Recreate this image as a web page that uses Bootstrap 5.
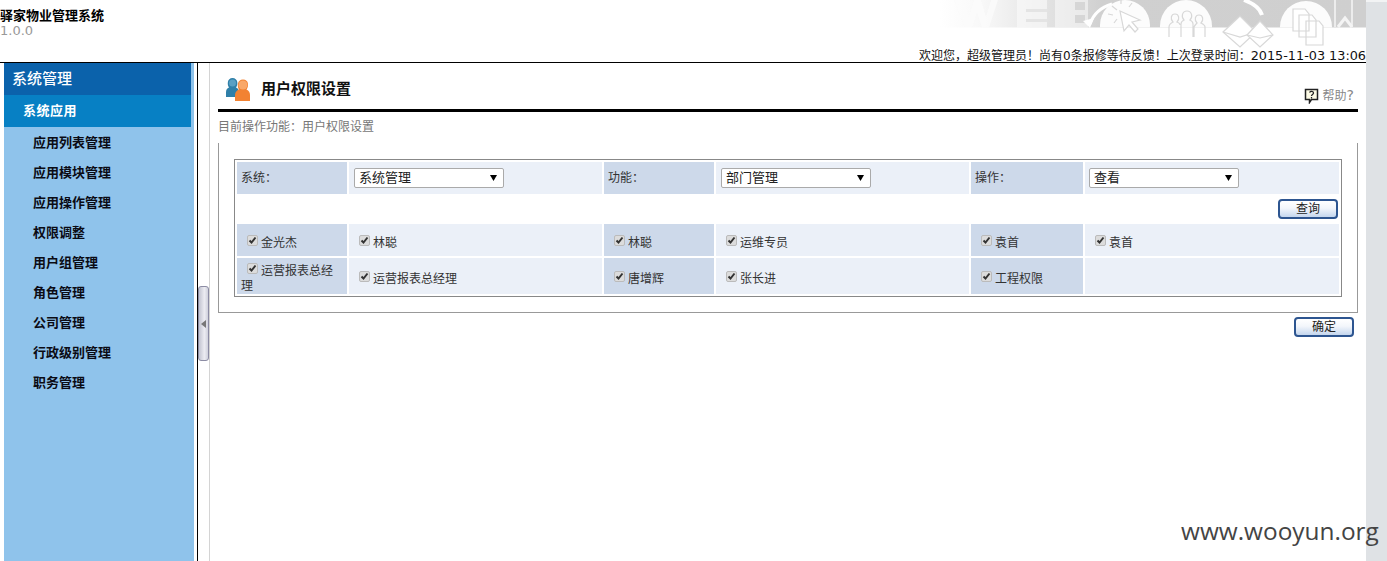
<!DOCTYPE html>
<html lang="zh-CN">
<head>
<meta charset="utf-8">
<title>用户权限设置</title>
<link href="https://cdn.jsdelivr.net/npm/bootstrap@5.3.0/dist/css/bootstrap.min.css" rel="stylesheet">
<style>
html,body{height:561px;overflow:hidden}
body{font-family:"DejaVu Sans","Noto Sans CJK SC",sans-serif;font-size:12px;line-height:15px;color:#333;background:#fff;position:relative}
.page-main{width:1366px;height:561px}
.scroll-strip{width:21px;height:561px;background:#dfe2e5;border-top:2px solid #f2f3f4}
.top-head{height:63px;border-bottom:1px solid #000;position:relative}
.banner-art{position:absolute;left:940px;top:0}
.sys-title{font-size:13px;font-weight:700;color:#000;padding-top:8px;line-height:15px}
.sys-ver{font-size:13px;color:#999;line-height:15px}
.welcome{position:absolute;right:0;top:48px;white-space:nowrap;color:#111;line-height:15px}
.welcome-date{font-size:12.800px}
.side-wrap{width:198px;padding-left:4px;border-right:1px solid #000;height:498px}
.side-menu{width:190px;height:498px;background:#8fc3eb;margin:0}
.side-head{width:187px;height:32px;line-height:33px;background:#0b62ab;color:#fff;font-size:15px;font-weight:500;padding-left:8px}
.side-sub{width:187px;height:32px;line-height:32px;background:#0780c4;color:#fff;font-size:13px;font-weight:700;letter-spacing:.5px;padding-left:19px}
.side-link{height:30px;line-height:30px;padding-left:29px;font-size:13px;font-weight:700;color:#0b0b14}
.side-list{padding-top:1px}
.toggle-col{width:12px;border-right:1px solid #d4d4d4;height:498px;padding-top:223px}
.toggle-grip{width:11px;height:75px;border:1px solid #8c8ca4;border-radius:3px;background:linear-gradient(90deg,#c2c4d0,#ececf2 60%,#cfd1dc)}
.work-area{width:1156px;padding-left:8px}
.title-row{height:46px;width:1140px;padding:14px 0 0 7px}
.page-name{font-size:15px;font-weight:700;color:#111;margin-left:10px;line-height:24px}
.help-link{color:#888;margin:8px 4px 0 0;height:21px;line-height:15px}
.help-mark{font-size:14px}
.rule-bar{height:3px;background:#000;width:1140px}
.crumb-line{height:31px;line-height:30px;color:#777}
.perm-panel{width:1140px;height:170px;border:1px solid #999;border-top:0;padding:16px 0 0 15px}
.perm-table{border-collapse:separate;border-spacing:2px;table-layout:fixed;width:1108px;border:1px solid #888}
.perm-table td{padding:0 4px;vertical-align:middle;line-height:15px}
.perm-table .row-shift td{padding-top:5px}
.cell-key{background:#cdd9ea}
.cell-val{background:#ebf0f8}
.row-a{height:32px}.row-b{height:26px}.row-c{height:36px}
.perm-select.form-select{width:150px;height:20px;padding:0 0 0 4px;margin-left:1px;font:13px/18px "DejaVu Sans","Noto Sans CJK SC",sans-serif;color:#222;border:1px solid #aaa;border-radius:2px;background-size:7px 6px;background-position:right 6px center;background-image:url("data:image/svg+xml,%3Csvg xmlns='http://www.w3.org/2000/svg' viewBox='0 0 7 6'%3E%3Cpath d='M0 0h7L3.500 6z' fill='%23000'/%3E%3C/svg%3E")}
.perm-table td:last-child .perm-select.form-select{margin-left:0}
.perm-check.form-check-input{width:11px;height:11px;margin:0 3px 5px 6px;vertical-align:middle;border:1px solid #bbb;border-radius:2px;opacity:1;background-color:#dcdcdc;background-size:9px 9px;background-image:url("data:image/svg+xml,%3Csvg xmlns='http://www.w3.org/2000/svg' viewBox='0 0 9 9'%3E%3Cpath d='M1.500 4.500l2 2 4-5' fill='none' stroke='%23333' stroke-width='2'/%3E%3C/svg%3E")}
.btn-old.btn{width:60px;height:20px;padding:0;font-size:12px;line-height:16px;color:#222;border:2px solid #2d5590;border-radius:4px;background:linear-gradient(#fff,#f3f6fb 45%,#c4d6ee)}
.btn-cell{text-align:right}
.perm-table td.btn-cell{padding:0 1px 0 0}
.confirm-row{width:1136px;text-align:right;padding-top:4px}
.mark-text{position:absolute;left:1181px;top:515px;font-family:"Open Sans",sans-serif;font-size:24.400px;line-height:32px;color:#444}
</style>
</head>
<body>
<div class="d-flex">
  <div class="page-main">
    <header class="top-head">
      <svg class="banner-art" width="426" height="50" viewBox="0 0 426 50" fill="none">
        <defs><linearGradient id="bandFade" x1="0" x2="1" y1="0" y2="0"><stop offset="0" stop-color="#fff"/><stop offset=".1" stop-color="#f8f8f8"/><stop offset=".38" stop-color="#d0d0d0"/><stop offset="1" stop-color="#cfcfcf"/></linearGradient></defs>
        <rect width="426" height="27.500" fill="url(#bandFade)"/>
        <g fill="#fbfbfb">
          <path d="M14 0h9l6 17 5-17h7l5 17 5-17h7l-9 27.500h-7l-5-15-5 15h-7z" opacity=".8"/>
          <rect x="77" y="0" width="30" height="27.500" opacity=".6"/>
          <rect x="115" y="0" width="33" height="27.500" opacity=".55"/>
        </g>
        <g fill="#e4e4e4"><rect x="86" y="9" width="21" height="3"/><rect x="86" y="19" width="21" height="3"/></g>
        <g fill="#d6d6d6"><rect x="135" y="2" width="10" height="8"/><rect x="135" y="15" width="10" height="8"/></g>
        <path d="M150 24c4-12 12-17 22-20" stroke="#fff" stroke-width="3"/><path d="M143 21l11-3-4 10z" fill="#fff"/>
        <clipPath id="bandClip"><rect width="426" height="27.500"/></clipPath>
        <g clip-path="url(#bandClip)" fill="#fcfcfc"><circle cx="185" cy="25" r="25"/><circle cx="246" cy="26" r="26"/><circle cx="366" cy="27" r="26"/></g>
        <g stroke="#d8d8d8" stroke-width="1.200">
          <path d="M180 11l20 9-8 2 6 7-3 3-6-7-5 6z" fill="#fff"/>
          <path d="M172 6l5 4M181 0v4M192 3l-3 4M168 14l5 1M177 19l-3 4"/>
          <path d="M229 37V27c0-3 2-4 4-5-3-3-2-8 2-8s5 5 2 8c2 1 3 1 3 3M241 37V24c0-2 1-3 3-4-3-3-2-9 3-9s6 6 3 9c2 1 3 2 3 4v13M254 37V27c1-2 2-3 3-4-3-3-2-8 2-8s5 5 2 8c2 1 4 2 4 4v10"/>
          <path d="M283 32l17-16 16 16-16 15z" fill="#fff"/><path d="M283 32l17 5 16-5"/>
          <path d="M307 35l13-14 13 14-13 12z" fill="#fff"/><path d="M307 35l13 3 13-3"/>
          <path d="M353 26V9h12l4 5v17h-16zM359 32V15h13l4 5v17h-17zM366 38V21h13l4 5v19h-17z" fill="#fff"/>
        </g>
        <path d="M304 0c8 3 16 8 18 15" stroke="#fff" stroke-width="4"/>
        <path d="M395 0v27M412 0v27" stroke="#ececec" stroke-width="2"/>
        <path d="M398 27l7-9 7 9" stroke="#f4f4f4" stroke-width="3"/>
      </svg>
      <div class="sys-title">驿家物业管理系统</div>
      <div class="sys-ver">1.0.0</div>
      <div class="welcome">欢迎您&#xFF0C;超级管理员&#xFF01;尚有0条报修等待反馈&#xFF01;上次登录时间&#xFF1A;<span class="welcome-date">2015-11-03 13:06</span></div>
    </header>
    <div class="d-flex">
      <div class="side-wrap">
        <nav class="side-menu">
          <div class="side-head">系统管理</div>
          <div class="side-sub">系统应用</div>
          <div class="side-list">
            <div class="side-link">应用列表管理</div>
            <div class="side-link">应用模块管理</div>
            <div class="side-link">应用操作管理</div>
            <div class="side-link">权限调整</div>
            <div class="side-link">用户组管理</div>
            <div class="side-link">角色管理</div>
            <div class="side-link">公司管理</div>
            <div class="side-link">行政级别管理</div>
            <div class="side-link">职务管理</div>
          </div>
        </nav>
      </div>
      <div class="toggle-col">
        <div class="toggle-grip d-flex align-items-center justify-content-center">
          <svg width="6" height="8" viewBox="0 0 6 8"><path d="M5 0v8L0 4z" fill="#777"/></svg>
        </div>
      </div>
      <main class="work-area">
        <div class="title-row d-flex">
          <svg width="26" height="25" viewBox="0 0 26 25">
            <path d="M1 20v-5c0-3 2-4 3-4.500C2 8 2 1 7.500 1c5.500 0 6 7 3.500 9.500 2 1 3 2 3 5V20z" fill="#2f7fa8"/>
            <circle cx="7.500" cy="6" r="3.500" fill="#5aa0c4"/>
            <path d="M10 24v-6c0-3 2-4.500 4-5.500-2-3-2-10 4-10s6 7 3.500 10c2.500 1 3.500 3 3.500 5.500v6z" fill="#f28232"/>
            <circle cx="18" cy="8" r="4.500" fill="#f9a869"/>
          </svg>
          <div class="page-name flex-grow-1">用户权限设置</div>
          <div class="help-link d-flex align-items-center gap-1">
            <svg width="15" height="16" viewBox="0 0 15 16"><path d="M1.500 1.500h12v10h-6l-2 3v-3h-4z" fill="#fdfbe6" stroke="#222" stroke-width="1.500"/><path d="M5.500 4.500c1-1.500 4-1.500 4 .5 0 1.500-2 1.500-2 3M7.500 9v1.500" fill="none" stroke="#222" stroke-width="1.300"/></svg>
            <span>帮助<span class="help-mark">?</span></span>
          </div>
        </div>
        <div class="rule-bar"></div>
        <div class="crumb-line">目前操作功能&#xFF1A;用户权限设置</div>
        <section class="perm-panel">
          <table class="perm-table">
            <colgroup><col style="width:110px"><col style="width:253px"><col style="width:110px"><col style="width:253px"><col style="width:112px"><col></colgroup>
            <tbody>
              <tr class="row-a">
                <td class="cell-key">系统&#xFF1A;</td>
                <td class="cell-val"><select class="form-select perm-select"><option>系统管理</option></select></td>
                <td class="cell-key">功能&#xFF1A;</td>
                <td class="cell-val"><select class="form-select perm-select"><option>部门管理</option></select></td>
                <td class="cell-key">操作&#xFF1A;</td>
                <td class="cell-val"><select class="form-select perm-select"><option>查看</option></select></td>
              </tr>
              <tr class="row-b"><td colspan="6" class="btn-cell"><button type="button" class="btn btn-old">查询</button></td></tr>
              <tr class="row-a row-shift">
                <td class="cell-key"><input class="form-check-input perm-check" type="checkbox" checked>金光杰</td>
                <td class="cell-val"><input class="form-check-input perm-check" type="checkbox" checked>林聪</td>
                <td class="cell-key"><input class="form-check-input perm-check" type="checkbox" checked>林聪</td>
                <td class="cell-val"><input class="form-check-input perm-check" type="checkbox" checked>运维专员</td>
                <td class="cell-key"><input class="form-check-input perm-check" type="checkbox" checked>袁首</td>
                <td class="cell-val"><input class="form-check-input perm-check" type="checkbox" checked>袁首</td>
              </tr>
              <tr class="row-c row-shift">
                <td class="cell-key"><input class="form-check-input perm-check" type="checkbox" checked>运营报表总经理</td>
                <td class="cell-val"><input class="form-check-input perm-check" type="checkbox" checked>运营报表总经理</td>
                <td class="cell-key"><input class="form-check-input perm-check" type="checkbox" checked>唐增辉</td>
                <td class="cell-val"><input class="form-check-input perm-check" type="checkbox" checked>张长进</td>
                <td class="cell-key"><input class="form-check-input perm-check" type="checkbox" checked>工程权限</td>
                <td class="cell-val"></td>
              </tr>
            </tbody>
          </table>
        </section>
        <div class="confirm-row"><button type="button" class="btn btn-old">确定</button></div>
      </main>
    </div>
  </div>
  <div class="scroll-strip"></div>
</div>
<div class="mark-text">www.wooyun.org</div>
<script src="https://cdn.jsdelivr.net/npm/bootstrap@5.3.0/dist/js/bootstrap.bundle.min.js"></script>
</body>
</html>
